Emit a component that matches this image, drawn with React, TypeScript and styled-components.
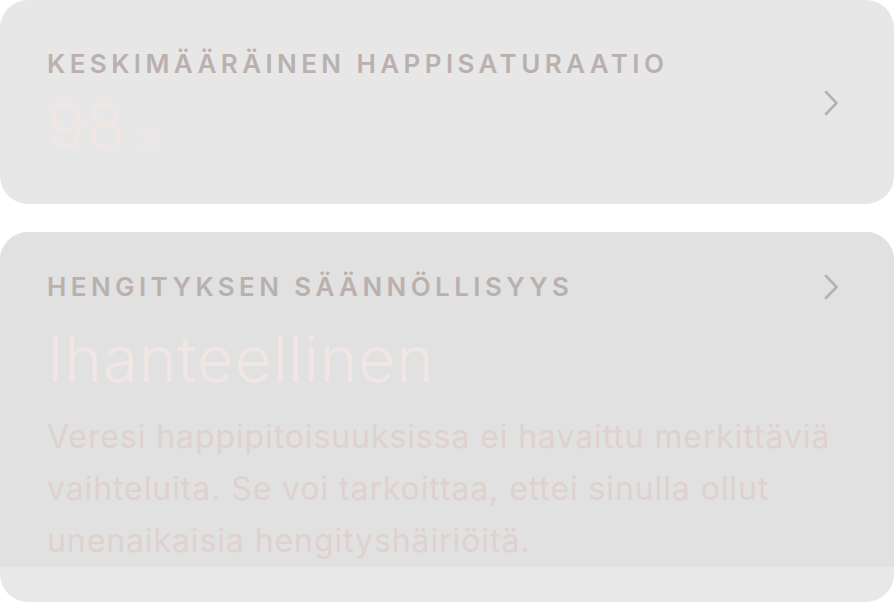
import styled, { createGlobalStyle } from "styled-components";

const GlobalStyle = createGlobalStyle`
    html, body {
        margin: 0;
        padding: 0;
        background: #ffffff;
    }
    body {
        font-family: Inter, "Noto Sans", "Liberation Sans", sans-serif;
    }
`

const Screen = styled.div`
    width: 894px;
    display: flex;
    flex-direction: column;
    gap: 28px;
`

const SummaryCard = styled.div`
    display: flex;
    align-items: center;
    background: #e7e7e7;
    border-radius: 28px;
    padding: 48px 56px 46px 47px;
`

const DetailCard = styled.div`
    display: flex;
    flex-direction: column;
    background: #e8e8e8;
    border-radius: 28px;
    overflow: hidden;
`

const DetailBody = styled.div`
    background: #e1e1e1;
    padding: 39px 56px 0 47px;
`

const DetailFooter = styled.div`
    height: 35px;
`

const Column = styled.div`
    flex: 1;
    display: flex;
    flex-direction: column;
`

const HeaderRow = styled.div`
    display: flex;
    align-items: center;
    justify-content: space-between;
`

const Label = styled.div`
    font-size: 26px;
    line-height: 32px;
    font-weight: 600;
    letter-spacing: 4.4px;
    text-transform: uppercase;
    color: #bab1ae;
    white-space: nowrap;
`

const ValueRow = styled.div<{ $gap: number }>`
    display: flex;
    align-items: baseline;
    margin-top: ${p => p.$gap}px;
`

const BigValue = styled.span`
    font-size: 64px;
    line-height: 64px;
    font-weight: 300;
    letter-spacing: 0.8px;
    color: #f0e7e4;
`

const Unit = styled.span`
    margin-left: 7px;
    font-size: 30px;
    font-weight: 300;
    color: #f0e7e4;
`

const Description = styled.p`
    margin: 20px 0 0;
    font-size: 32px;
    line-height: 52px;
    font-weight: 400;
    letter-spacing: 0.9px;
    color: #dfd1ce;
`

function Chevron() {
    return (
        <svg width="14" height="26" viewBox="0 0 14 26" fill="none">
            <path d="M2 2 L12.5 13 L2 24" stroke="#bab1ae" strokeWidth="2.6" strokeLinecap="round" strokeLinejoin="round" />
        </svg>
    );
}

export default function App() {
    return (
        <>
            <GlobalStyle />
            <Screen>
                <SummaryCard>
                    <Column>
                        <Label>Keskimääräinen happisaturaatio</Label>
                        <ValueRow $gap={14}>
                            <BigValue>98</BigValue>
                            <Unit>%</Unit>
                        </ValueRow>
                    </Column>
                    <Chevron />
                </SummaryCard>
                <DetailCard>
                    <DetailBody>
                        <HeaderRow>
                            <Label>Hengityksen säännöllisyys</Label>
                            <Chevron />
                        </HeaderRow>
                        <ValueRow $gap={24}>
                            <BigValue>Ihanteellinen</BigValue>
                        </ValueRow>
                        <Description>
                            Veresi happipitoisuuksissa ei havaittu merkittäviä vaihteluita. Se voi tarkoittaa, ettei sinulla ollut unenaikaisia hengityshäiriöitä.
                        </Description>
                    </DetailBody>
                    <DetailFooter />
                </DetailCard>
            </Screen>
        </>
    );
}
